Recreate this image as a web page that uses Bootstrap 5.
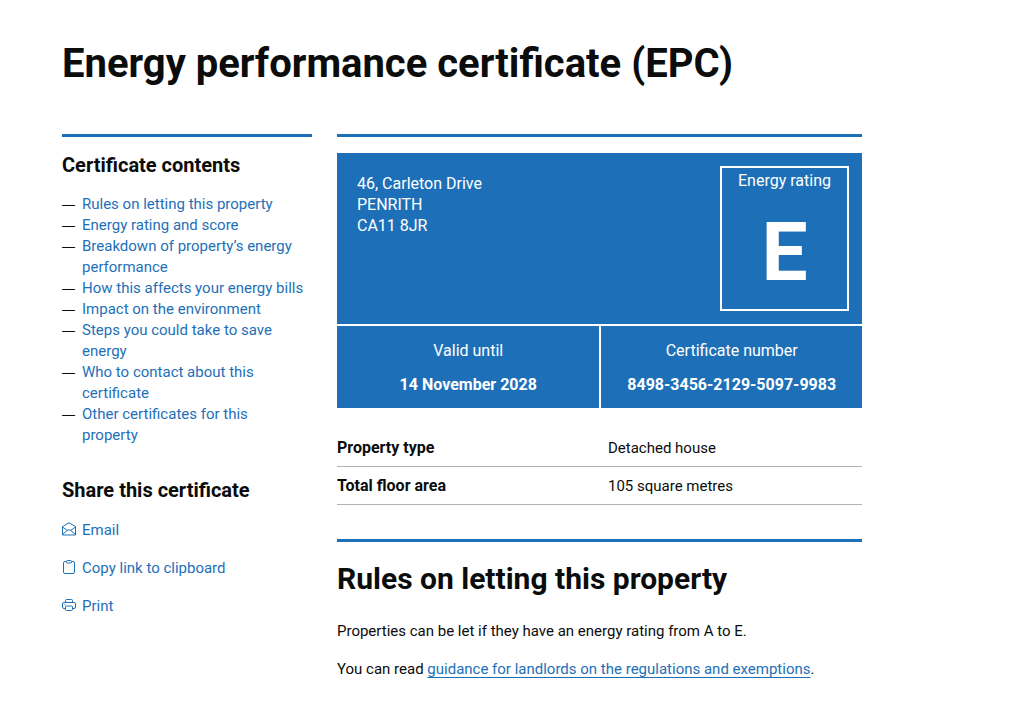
<!DOCTYPE html>
<html lang="en">
<head>
<meta charset="utf-8">
<meta name="viewport" content="width=device-width, initial-scale=1">
<title>Energy performance certificate (EPC)</title>
<link rel="stylesheet" href="https://cdn.jsdelivr.net/npm/bootstrap@5.3.0/dist/css/bootstrap.min.css">
<style>
  body { font-family: Roboto, "Liberation Sans", sans-serif; font-size: 15px; line-height: 21px; color: #0b0c0c; background: #fff; }
  a { color: #1d70b8; }
  h1, h2, h3 { font-weight: 700; margin: 0; }
  h1 { font-size: 40px; line-height: 44px; }
  h2 { font-size: 30px; line-height: 34px; }
  h3 { font-size: 20px; line-height: 24px; }
  .page { max-width: 862px; padding: 42px 0 32px 62px; }
  .columns { --bs-gutter-x: 25px; margin-top: 48px; }
  .ruled { border-top: 3px solid #1d70b8; }
  .contents-list { margin: 17px 0 0; }
  .contents-list li { position: relative; padding: 0 7px 0 20px; }
  .contents-list li::before { content: "—"; position: absolute; left: 0; color: #0b0c0c; font-family: "Liberation Sans", sans-serif; font-size: 13px; }
  .contents-list a, .share-list a { text-decoration: none; }
  .share { margin-top: 32px; }
  .share-list { margin: 18px 0 0; gap: 17px; }
  .share-list svg { width: 14px; height: 14px; margin-bottom: 3px; fill: none; stroke: currentColor; stroke-width: 1; stroke-linejoin: round; }
  .share-list a { gap: 6px; }
  .certificate { background: #1d70b8; color: #fff; margin-top: 16px; font-size: 16px; }
  .certificate-top { min-height: 171px; padding: 13px 13px 13px 20px; }
  .certificate address { margin: 7px 0 0; line-height: 21px; }
  .rating { width: 129px; height: 145px; border: 2px solid #fff; padding-top: 2px; }
  .rating strong { font-size: 82px; line-height: 84px; margin-top: 19px; }
  .certificate-bottom { border-top: 2px solid #fff; }
  .certificate-bottom > div { padding: 14px 0 13px; gap: 13px; }
  .certificate-bottom > div + div { border-left: 2px solid #fff; }
  .facts { margin: 21px 0 34px; }
  .facts th, .facts td { padding: 8px 0 7px; border-bottom: 1px solid #b1b4b6; vertical-align: baseline; }
  .facts th { width: 271px; font-size: 16px; }
  .rules h2 { margin: 20px 0 25px; }
  .rules p { margin: 0 0 17px; }
  .rules a { text-underline-offset: 3px; text-decoration-thickness: 1px; }
</style>
<script src="https://cdn.jsdelivr.net/npm/bootstrap@5.3.0/dist/js/bootstrap.bundle.min.js"></script>
</head>
<body>
<main class="page">
  <h1>Energy performance certificate (EPC)</h1>
  <div class="row columns">
    <aside class="col-4">
      <nav class="ruled" aria-labelledby="contents-title">
        <h3 id="contents-title" class="mt-3">Certificate contents</h3>
        <ul class="contents-list list-unstyled">
          <li><a href="#rules">Rules on letting this property</a></li>
          <li><a href="#rating">Energy rating and score</a></li>
          <li><a href="#breakdown">Breakdown of property’s energy performance</a></li>
          <li><a href="#bills">How this affects your energy bills</a></li>
          <li><a href="#impact">Impact on the environment</a></li>
          <li><a href="#steps">Steps you could take to save energy</a></li>
          <li><a href="#contact">Who to contact about this certificate</a></li>
          <li><a href="#other">Other certificates for this property</a></li>
        </ul>
      </nav>
      <section class="share">
        <h3>Share this certificate</h3>
        <ul class="share-list list-unstyled d-flex flex-column">
          <li><a href="#email" class="d-flex align-items-center">
            <svg viewBox="0 0 14 14" aria-hidden="true"><path d="M.5 4.500 7 .8l6.500 3.700v8.500H.5zM.5 5l5 3.500M13.500 5l-5 3.500M.5 12.500l5-4.200Q7 7.300 8.500 8.300l5 4.200"/></svg>
            Email</a></li>
          <li><a href="#copy" class="d-flex align-items-center">
            <svg viewBox="0 0 14 14" aria-hidden="true"><path d="M4.500 1.500H3q-1.500 0-1.500 1.500v9q0 1.500 1.500 1.500h8q1.500 0 1.500-1.500V3q0-1.500-1.500-1.500H9.500"/><rect x="4.500" y=".5" width="5" height="2.500" rx="1"/></svg>
            Copy link to clipboard</a></li>
          <li><a href="#print" class="d-flex align-items-center">
            <svg viewBox="0 0 14 14" aria-hidden="true"><path d="M3.500 4.500V2.500q0-1 1-1h5q1 0 1 1v2M3.500 10.500H2q-1.500 0-1.500-1.500V6q0-1.500 1.500-1.500h10q1.500 0 1.500 1.500v3q0 1.500-1.500 1.500h-1.500"/><rect x="3.500" y="8" width="7" height="4.500" rx="1"/><path d="M2.500 6.500h1"/></svg>
            Print</a></li>
        </ul>
      </section>
    </aside>
    <div class="col-8">
      <div class="ruled"></div>
      <section class="certificate">
        <div class="certificate-top d-flex justify-content-between align-items-start">
          <address>46, Carleton Drive<br>PENRITH<br>CA11 8JR</address>
          <div class="rating d-flex flex-column align-items-center"><span>Energy rating</span><strong>E</strong></div>
        </div>
        <div class="certificate-bottom d-flex text-center">
          <div class="col-6 d-flex flex-column"><span>Valid until</span><strong>14 November 2028</strong></div>
          <div class="col-6 d-flex flex-column"><span>Certificate number</span><strong>8498-3456-2129-5097-9983</strong></div>
        </div>
      </section>
      <table class="facts w-100">
        <tbody>
          <tr><th scope="row">Property type</th><td>Detached house</td></tr>
          <tr><th scope="row">Total floor area</th><td>105 square metres</td></tr>
        </tbody>
      </table>
      <section id="rules" class="rules ruled">
        <h2>Rules on letting this property</h2>
        <p>Properties can be let if they have an energy rating from A to E.</p>
        <p>You can read <a href="#guidance">guidance for landlords on the regulations and exemptions</a>.</p>
      </section>
    </div>
  </div>
</main>
</body>
</html>
